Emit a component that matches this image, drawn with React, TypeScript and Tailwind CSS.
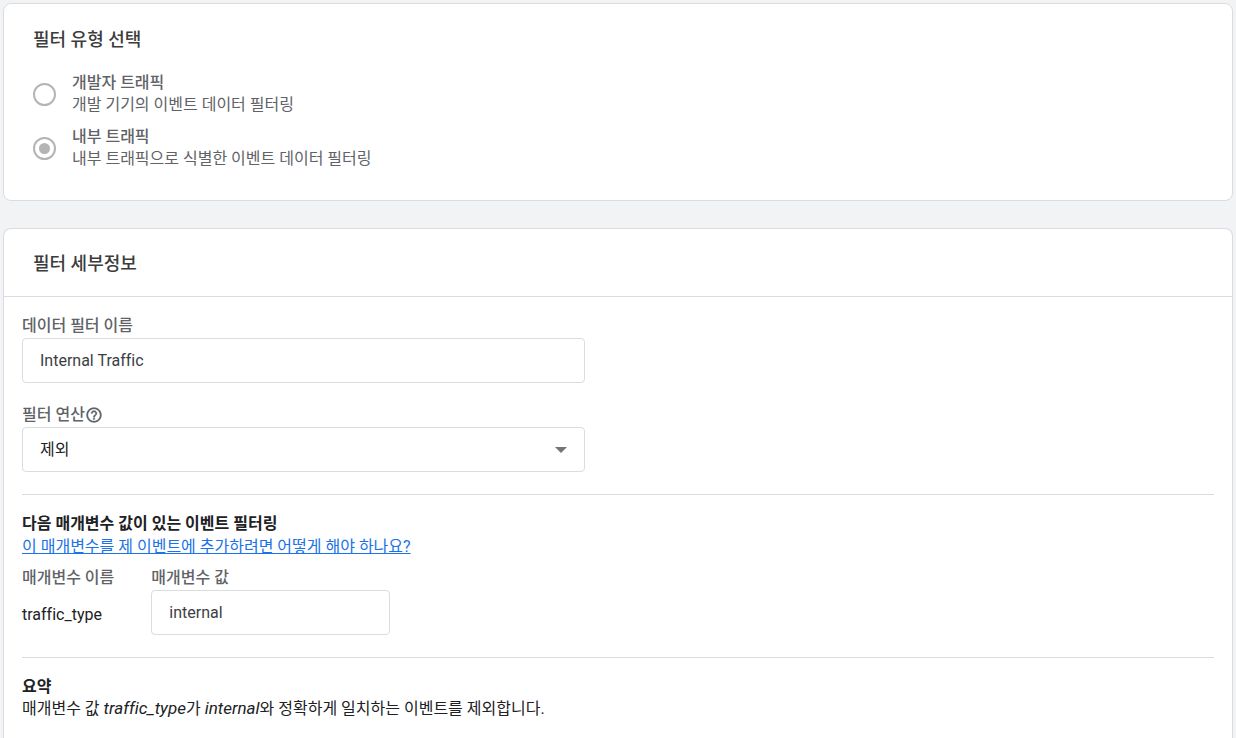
import { useState } from "react";

const font = "font-[Roboto,'Noto_Sans_CJK_KR',sans-serif]";

const filterTypes = [
  { id: "developer", title: "개발자 트래픽", description: "개발 기기의 이벤트 데이터 필터링" },
  { id: "internal", title: "내부 트래픽", description: "내부 트래픽으로 식별한 이벤트 데이터 필터링" },
];

function HelpIcon() {
  return (
    <svg viewBox="0 0 24 24" className="size-[18px] fill-current stroke-current stroke-[0.4]" aria-hidden="true">
      <path d="M11 18h2v-2h-2v2zm1-16C6.48 2 2 6.48 2 12s4.48 10 10 10 10-4.48 10-10S17.52 2 12 2zm0 18c-4.41 0-8-3.59-8-8s3.59-8 8-8 8 3.59 8 8-3.59 8-8 8zm0-14c-2.21 0-4 1.79-4 4h2c0-1.1.9-2 2-2s2 .9 2 2c0 2-3 1.75-3 5h2c0-2.25 3-2.5 3-5 0-2.21-1.79-4-4-4z" />
    </svg>
  );
}

export default function App() {
  const [filterType, setFilterType] = useState("internal");
  const [name, setName] = useState("Internal Traffic");
  const [operation, setOperation] = useState("exclude");
  const [value, setValue] = useState("internal");

  return (
    <main lang="ko" className={`min-h-screen bg-[#f1f3f4] px-[3px] pt-[3px] text-base leading-[22px] text-[#202124] [font-variant-ligatures:none] ${font}`}>
      <section className="rounded-lg border border-[#dadce0] bg-white px-[29px] pt-6 pb-[30px]">
        <h2 className="text-lg leading-6 font-medium text-[#3c3c3c]">필터 유형 선택</h2>
        <div className="mt-5 space-y-[10px] text-[#5f6368]">
          {filterTypes.map((type) => (
            <label key={type.id} className="flex items-center gap-4">
              <input
                type="radio"
                name="filterType"
                value={type.id}
                checked={filterType === type.id}
                onChange={() => setFilterType(type.id)}
                className="size-[23px] shrink-0 appearance-none rounded-full border-2 border-[#b4b4b4] bg-white bg-clip-content p-1 checked:bg-[#b4b4b4]"
              />
              <span>
                <span className="block font-medium">{type.title}</span>
                <span className="block">{type.description}</span>
              </span>
            </label>
          ))}
        </div>
      </section>

      <section className="mt-[27px] rounded-t-lg border border-b-0 border-[#dadce0] bg-white">
        <h2 className="border-b border-[#dadce0] px-[29px] pt-[23px] pb-5 text-lg leading-6 font-medium text-[#3c3c3c]">필터 세부정보</h2>
        <div className="px-[18px] pt-[18px] pb-8">
          <label htmlFor="name" className="mb-px block font-medium text-[#5f6368]">데이터 필터 이름</label>
          <input
            id="name"
            value={name}
            onChange={(e) => setName(e.target.value)}
            className="block h-[45px] w-full max-w-[563px] rounded border border-[#dadce0] px-[17px] text-[#3c4043]"
          />

          <div className="mt-[21px] mb-px flex items-center font-medium text-[#5f6368]">
            <label htmlFor="operation">필터 연산</label>
            <button type="button" aria-label="필터 연산 도움말">
              <HelpIcon />
            </button>
          </div>
          <div className="relative max-w-[563px]">
            <select
              id="operation"
              value={operation}
              onChange={(e) => setOperation(e.target.value)}
              className="block h-[45px] w-full appearance-none rounded border border-[#dadce0] bg-white px-[17px]"
            >
              <option value="exclude">제외</option>
              <option value="include">포함</option>
            </select>
            <svg viewBox="0 0 12 6" className="pointer-events-none absolute top-5 right-[18px] h-[6px] w-3 fill-[#757575]" aria-hidden="true">
              <path d="M0 0h12L6 6z" />
            </svg>
          </div>

          <hr className="mt-[22px] border-[#dadce0]" />

          <h3 className="mt-[18px] font-bold">다음 매개변수 값이 있는 이벤트 필터링</h3>
          <p className="leading-6">
            <a href="#parameters" className="text-[#1a73e8] underline">이 매개변수를 제 이벤트에 추가하려면 어떻게 해야 하나요?</a>
          </p>
          <div className="mt-2 flex gap-[37px]">
            <div>
              <div className="font-medium text-[#5f6368]">매개변수 이름</div>
              <div className="mt-[15px]">traffic_type</div>
            </div>
            <div>
              <label htmlFor="value" className="mb-px block font-medium text-[#5f6368]">매개변수 값</label>
              <input
                id="value"
                value={value}
                onChange={(e) => setValue(e.target.value)}
                className="block h-[45px] w-[239px] rounded border border-[#dadce0] px-[17px] text-[#3c4043]"
              />
            </div>
          </div>

          <hr className="mt-[22px] border-[#dadce0]" />

          <h3 className="mt-[18px] font-bold">요약</h3>
          <p>
            매개변수 값 <i className="text-[17px] leading-none">traffic_type</i>가 <i className="text-[17px] leading-none">internal</i>와 정확하게 일치하는 이벤트를 제외합니다.
          </p>
        </div>
      </section>
    </main>
  );
}
